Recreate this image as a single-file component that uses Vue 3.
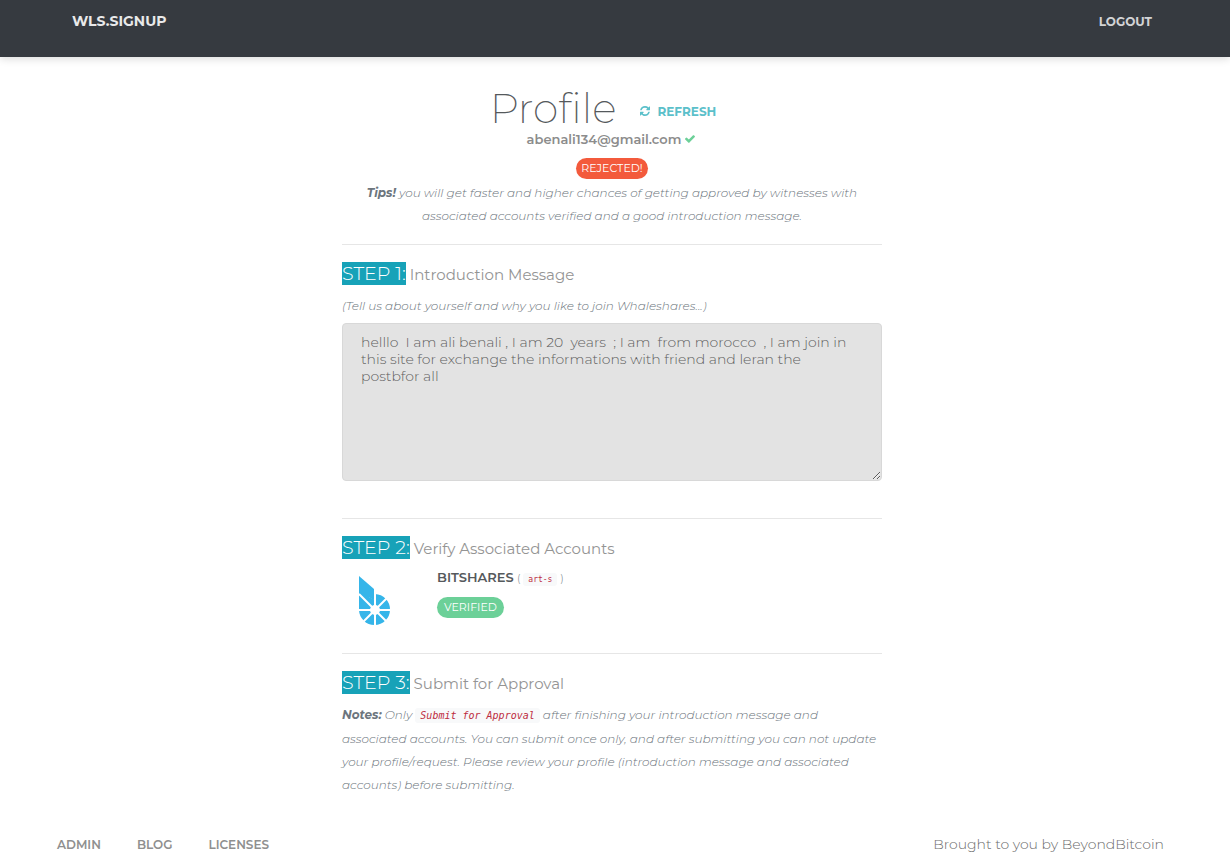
<script setup>
import { ref } from 'vue'

const message = ref(
  'helllo  I am ali benali , I am 20  years  ; I am  from morocco  , I am join in this site for exchange the informations with friend and leran the postbfor all'
)
const footerLinks = ['Admin', 'Blog', 'Licenses']
</script>

<template>
  <div class="page">
    <header class="navbar">
      <nav class="nav-inner">
        <a class="brand" href="#">WLS.SIGNUP</a>
        <a class="logout" href="#">LOGOUT</a>
      </nav>
    </header>

    <main class="content">
      <section class="intro">
        <div class="title-row">
          <h1>Profile</h1>
          <button class="refresh" type="button">
            <svg class="refresh-icon" viewBox="0 0 1536 1536" aria-hidden="true">
              <path d="M1511 928q0 5-1 7-64 268-268 434.500T764 1536q-146 0-282.500-55T238 1324l-129 129q-19 19-45 19t-45-19-19-45V960q0-26 19-45t45-19h448q26 0 45 19t19 45-19 45l-137 137q71 66 161 102t187 36q134 0 250-65t186-179q11-17 53-117 8-23 30-23h192q13 0 22.500 9.500t9.500 22.500zm25-800v448q0 26-19 45t-45 19h-448q-26 0-45-19t-19-45 19-45l138-138Q969 256 768 256q-134 0-250 65T332 500q-11 17-53 117-8 23-30 23H50q-13 0-22.500-9.500T18 608v-7q65-268 270-434.500T768 0q146 0 284 55.500T1297 212l130-129q19-19 45-19t45 19 19 45z" />
            </svg>
            <span>REFRESH</span>
          </button>
        </div>
        <div class="email">
          <span>abenali134@gmail.com</span>
          <svg class="check-icon" viewBox="0 0 1550 1188" role="img" aria-label="Confirmed">
            <path d="M1550 232q0 40-28 68l-724 724-136 136q-28 28-68 28t-68-28l-136-136L28 662Q0 634 0 594t28-68l136-136q28-28 68-28t68 28l294 295 656-657q28-28 68-28t68 28l136 136q28 28 28 68z" />
          </svg>
        </div>
        <span class="badge rejected">REJECTED!</span>
        <p class="hint tips"><b>Tips!</b> you will get faster and higher chances of getting approved by witnesses with associated accounts verified and a good introduction message.</p>
      </section>

      <section class="step step-message">
        <h2><span class="step-tag">STEP 1:</span> <label for="message">Introduction Message</label></h2>
        <p class="hint">(Tell us about yourself and why you like to join Whaleshares...)</p>
        <textarea id="message" v-model="message" readonly></textarea>
      </section>

      <section class="step">
        <h2><span class="step-tag">STEP 2:</span> Verify Associated Accounts</h2>
        <div class="account">
          <svg class="bitshares" viewBox="0 0 32 50" role="img" aria-label="BitShares">
            <path class="mark" d="M0 0 15 13v11L0 16z" />
            <path class="mark" d="M0 16 16 24v-6a15.500 15.500 0 1 1-16 16z" />
            <path class="mark" d="M0 14h10v20H0z" />
            <path class="cut" d="M16 16v34M0 34h32M0 18l28 28M28 22 4 46" />
            <circle class="hub" cx="16" cy="34" r="5" />
          </svg>
          <div class="account-info">
            <div class="account-name"><strong>BITSHARES</strong> <small>( <code>art-s</code> )</small></div>
            <span class="badge verified">VERIFIED</span>
          </div>
        </div>
      </section>

      <section class="step">
        <h2><span class="step-tag">STEP 3:</span> Submit for Approval</h2>
        <p class="hint notes"><b>Notes:</b> Only <code>Submit for Approval</code> after finishing your introduction message and associated accounts. You can submit once only, and after submitting you can not update your profile/request. Please review your profile (introduction message and associated accounts) before submitting.</p>
      </section>
    </main>

    <footer class="footer">
      <nav class="footer-links">
        <a v-for="link in footerLinks" :key="link" href="#">{{ link }}</a>
      </nav>
      <span class="credit">Brought to you by BeyondBitcoin</span>
    </footer>
  </div>
</template>

<style>
body {
  margin: 0;
  background: #fff;
}
</style>

<style scoped>
* {
  box-sizing: border-box;
}
.page {
  font-family: Montserrat, Inter, "Liberation Sans", sans-serif;
  font-size: 15px;
  font-weight: 300;
  line-height: 23px;
  color: #6c757d;
}
a {
  text-decoration: none;
}
.navbar {
  height: 57px;
  padding-right: 6px;
  background: #363a40;
  box-shadow: 0 2px 8px rgba(0, 0, 0, 0.14);
}
.nav-inner {
  display: flex;
  justify-content: space-between;
  max-width: 1080px;
  margin: 0 auto;
  padding-top: 10px;
}
.brand {
  font-size: 14px;
  font-weight: 700;
  color: #e9e9ea;
}
.logout {
  font-size: 12px;
  font-weight: 700;
  color: #d2d3d5;
}
.content {
  max-width: 546px;
  margin: 0 auto;
  padding: 28px 6px 0 0;
}
.intro {
  display: flex;
  flex-direction: column;
  align-items: center;
  padding-bottom: 17px;
}
.title-row {
  display: flex;
  align-items: center;
  gap: 24px;
  padding-right: 18px;
}
h1 {
  margin: 0;
  padding-top: 2px;
  font-size: 41px;
  font-weight: 200;
  font-variant-ligatures: none;
  line-height: 42px;
  color: #55595c;
}
.refresh {
  display: flex;
  align-items: center;
  gap: 7px;
  padding: 8px 0 0;
  border: 0;
  background: none;
  font-family: inherit;
  font-size: 12px;
  font-weight: 700;
  color: #5bc0ca;
}
.refresh-icon {
  width: 10px;
  height: 10px;
  fill: currentColor;
}
.email {
  display: flex;
  align-items: center;
  gap: 4px;
  height: 20px;
  padding-right: 2px;
  font-size: 13px;
  font-weight: 600;
  color: #8c8c8c;
}
.check-icon {
  width: 10px;
  height: 8px;
  fill: #6cd098;
}
.badge {
  display: inline-block;
  padding: 0 7px;
  border-radius: 11px;
  font-size: 11px;
  font-weight: 400;
  line-height: 21px;
  color: #fff;
}
.rejected {
  margin-top: 9px;
  padding: 0 5px;
  background: #f35a3c;
}
.verified {
  background: #6cd098;
}
.hint {
  margin: 0;
  font-size: 12px;
  font-style: italic;
  line-height: 23px;
}
.hint b {
  font-weight: 700;
}
.tips {
  margin-top: 2px;
  padding: 0 20px;
  text-align: center;
}
.step {
  padding-top: 17px;
  border-top: 1px solid #e6e6e6;
}
h2 {
  margin: 0;
  font-size: 15px;
  font-weight: 400;
  line-height: 26px;
  color: #949494;
}
.step-tag {
  display: inline-block;
  background: #17a2b8;
  font-size: 19px;
  font-weight: 300;
  line-height: 23px;
  color: #fff;
}
.step-message .hint {
  padding: 6px 0;
}
textarea {
  display: block;
  width: 100%;
  height: 158px;
  padding: 10px 22px 10px 18px;
  border: 1px solid #d8d8d8;
  border-radius: 4px;
  background: #e3e3e3;
  font-family: inherit;
  font-size: 14px;
  font-weight: 300;
  line-height: 17px;
  color: #5f5f5f;
  outline: 0;
  resize: vertical;
}
.step-message {
  padding-bottom: 37px;
}
.account {
  display: flex;
  padding: 4px 0 27px 17px;
}
.bitshares {
  width: 32px;
  height: 50px;
  margin: 10px 46px 0 0;
}
.mark {
  fill: #35b5e9;
}
.cut {
  fill: none;
  stroke: #fff;
  stroke-width: 2;
}
.hub {
  fill: #fff;
}
.account-info {
  font-size: 13px;
}
.account-name {
  margin-bottom: 4px;
}
.account-name strong {
  font-weight: 600;
  color: #55595c;
}
.account-name small {
  font-size: 11px;
}
code {
  padding: 2px 5px;
  border-radius: 3px;
  background: #f8f9fa;
  font-family: "DejaVu Sans Mono", monospace;
  font-size: 10px;
  font-weight: 400;
  color: #bd2c40;
}
small code {
  font-size: 8px;
}
.notes {
  padding: 6px 0 2px;
}
.footer {
  display: flex;
  justify-content: space-between;
  padding: 35px 66px 7px 57px;
}
.footer-links {
  display: flex;
  gap: 36px;
}
.footer-links a {
  font-size: 12px;
  font-weight: 600;
  text-transform: uppercase;
  color: #8f8f8f;
}
.credit {
  font-size: 14px;
  color: #6c6c6c;
}
</style>
